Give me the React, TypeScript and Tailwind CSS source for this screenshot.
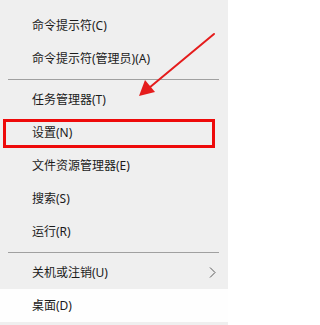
import React from 'react'

type Item = { label: string; sep?: false; submenu?: boolean; active?: boolean; marked?: boolean }
type Sep = { sep: true }

const items: (Item | Sep)[] = [
  { label: '命令提示符(C)' },
  { label: '命令提示符(管理员)(A)' },
  { sep: true },
  { label: '任务管理器(T)' },
  { label: '设置(N)', marked: true },
  { label: '文件资源管理器(E)' },
  { label: '搜索(S)' },
  { label: '运行(R)' },
  { sep: true },
  { label: '关机或注销(U)', submenu: true },
  { label: '桌面(D)', active: true },
]

function MenuRow({ item }: { item: Item }) {
  return (
    <div
      className={
        'relative h-[33px] flex items-center pl-[32px] pr-[11px] ' +
        (item.active ? 'bg-[#fefefe]' : '')
      }
    >
      <span className="flex-1 text-[12px] leading-none text-[#1b1b1b]">{item.label}</span>
      {item.submenu && (
        <svg width="7" height="11" viewBox="0 0 7 11" className="mr-[1px]">
          <path d="M1 0.5 L6 5.5 L1 10.5" fill="none" stroke="#5a5a5a" strokeWidth="1" />
        </svg>
      )}
      {item.marked && (
        <div className="absolute left-[3px] top-[3px] w-[212px] h-[29px] border-[3px] border-[#ee0a0a]" />
      )}
    </div>
  )
}

export default function App() {
  return (
    <div
      className="relative w-[228px] h-[325px] overflow-hidden bg-[#efefef] pt-[9px]"
      style={{ fontFamily: '"Noto Sans", "Noto Sans CJK SC", sans-serif' }}
    >
      {items.map((it, i) =>
        it.sep ? (
          <div key={i} className="h-[8px] pt-[4px] px-[8px]">
            <div className="h-px w-[211px] bg-[#a0a0a0]" />
          </div>
        ) : (
          <MenuRow key={i} item={it} />
        )
      )}

      {/* red annotation arrow */}
      <svg className="absolute left-0 top-0 pointer-events-none" width="228" height="325" viewBox="0 0 228 325">
        <line x1="214" y1="34" x2="149" y2="88" stroke="#e51c1c" strokeWidth="2" strokeLinecap="round" />
        <polygon points="139,96 155,92 145,80" fill="#e51c1c" />
      </svg>
    </div>
  )
}
